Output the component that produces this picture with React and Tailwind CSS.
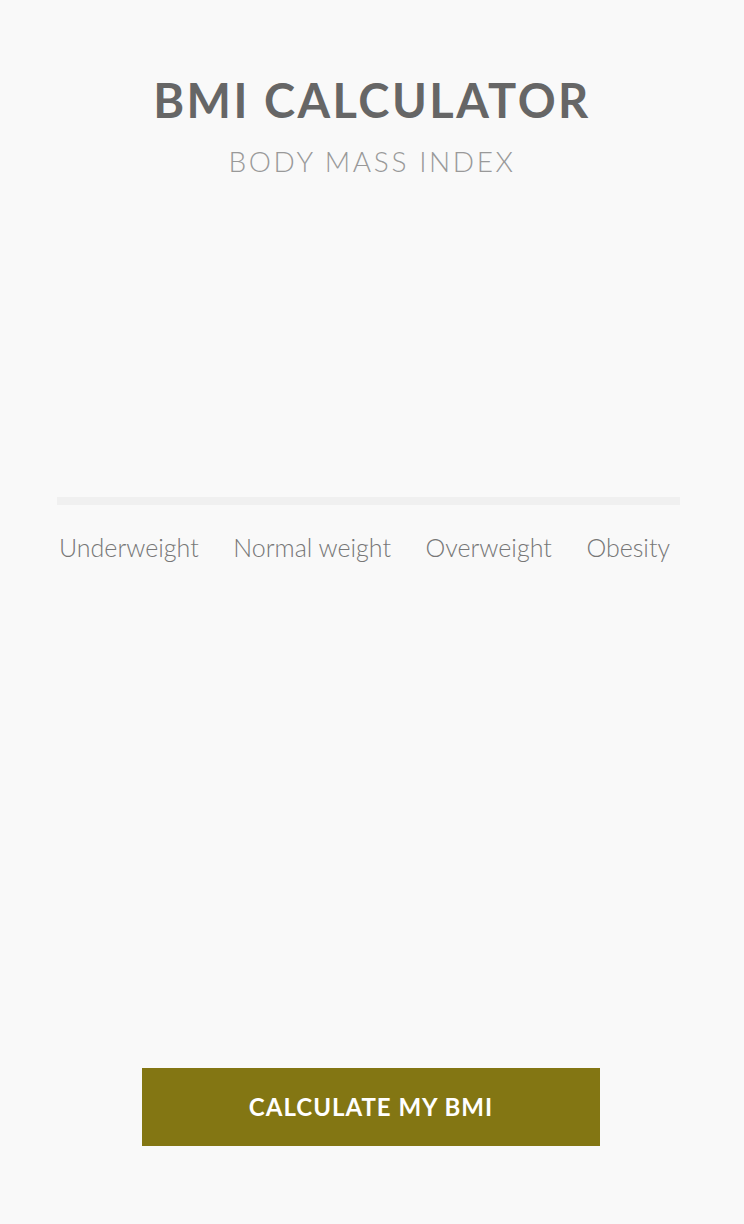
import React from 'react';

const categories = ['Underweight', 'Normal weight', 'Overweight', 'Obesity'];

const App = () => {
  return (
    <div className="min-h-[1224px] bg-[#f9f9f9] flex flex-col items-center font-['Lato','Noto_Sans',sans-serif]">
      {/* header */}
      <h1 className="mt-[72px] text-[47px] leading-[56px] font-bold tracking-[2.5px] text-[#666666]">
        BMI CALCULATOR
      </h1>
      <h2 className="mt-[16px] text-[28px] leading-[34px] font-light tracking-[2.6px] text-[#999999]">
        BODY MASS INDEX
      </h2>

      {/* scale */}
      <div className="mt-[319px] w-[623px] mr-[7px]">
        <div className="h-[8px] bg-[#f0f0f0]" />
        <div className="mt-[25px] flex justify-between pl-[2px] pr-[10px] text-[25px] leading-[34px] font-light text-[#777777]">
          {categories.map((c) => (
            <span key={c}>{c}</span>
          ))}
        </div>
      </div>

      {/* action */}
      <button
        type="button"
        className="mt-[504px] w-[458px] h-[78px] mr-[2px] bg-[#837613] text-white text-[24px] font-bold tracking-[1px]"
      >
        CALCULATE MY BMI
      </button>
    </div>
  );
};

export default App;
